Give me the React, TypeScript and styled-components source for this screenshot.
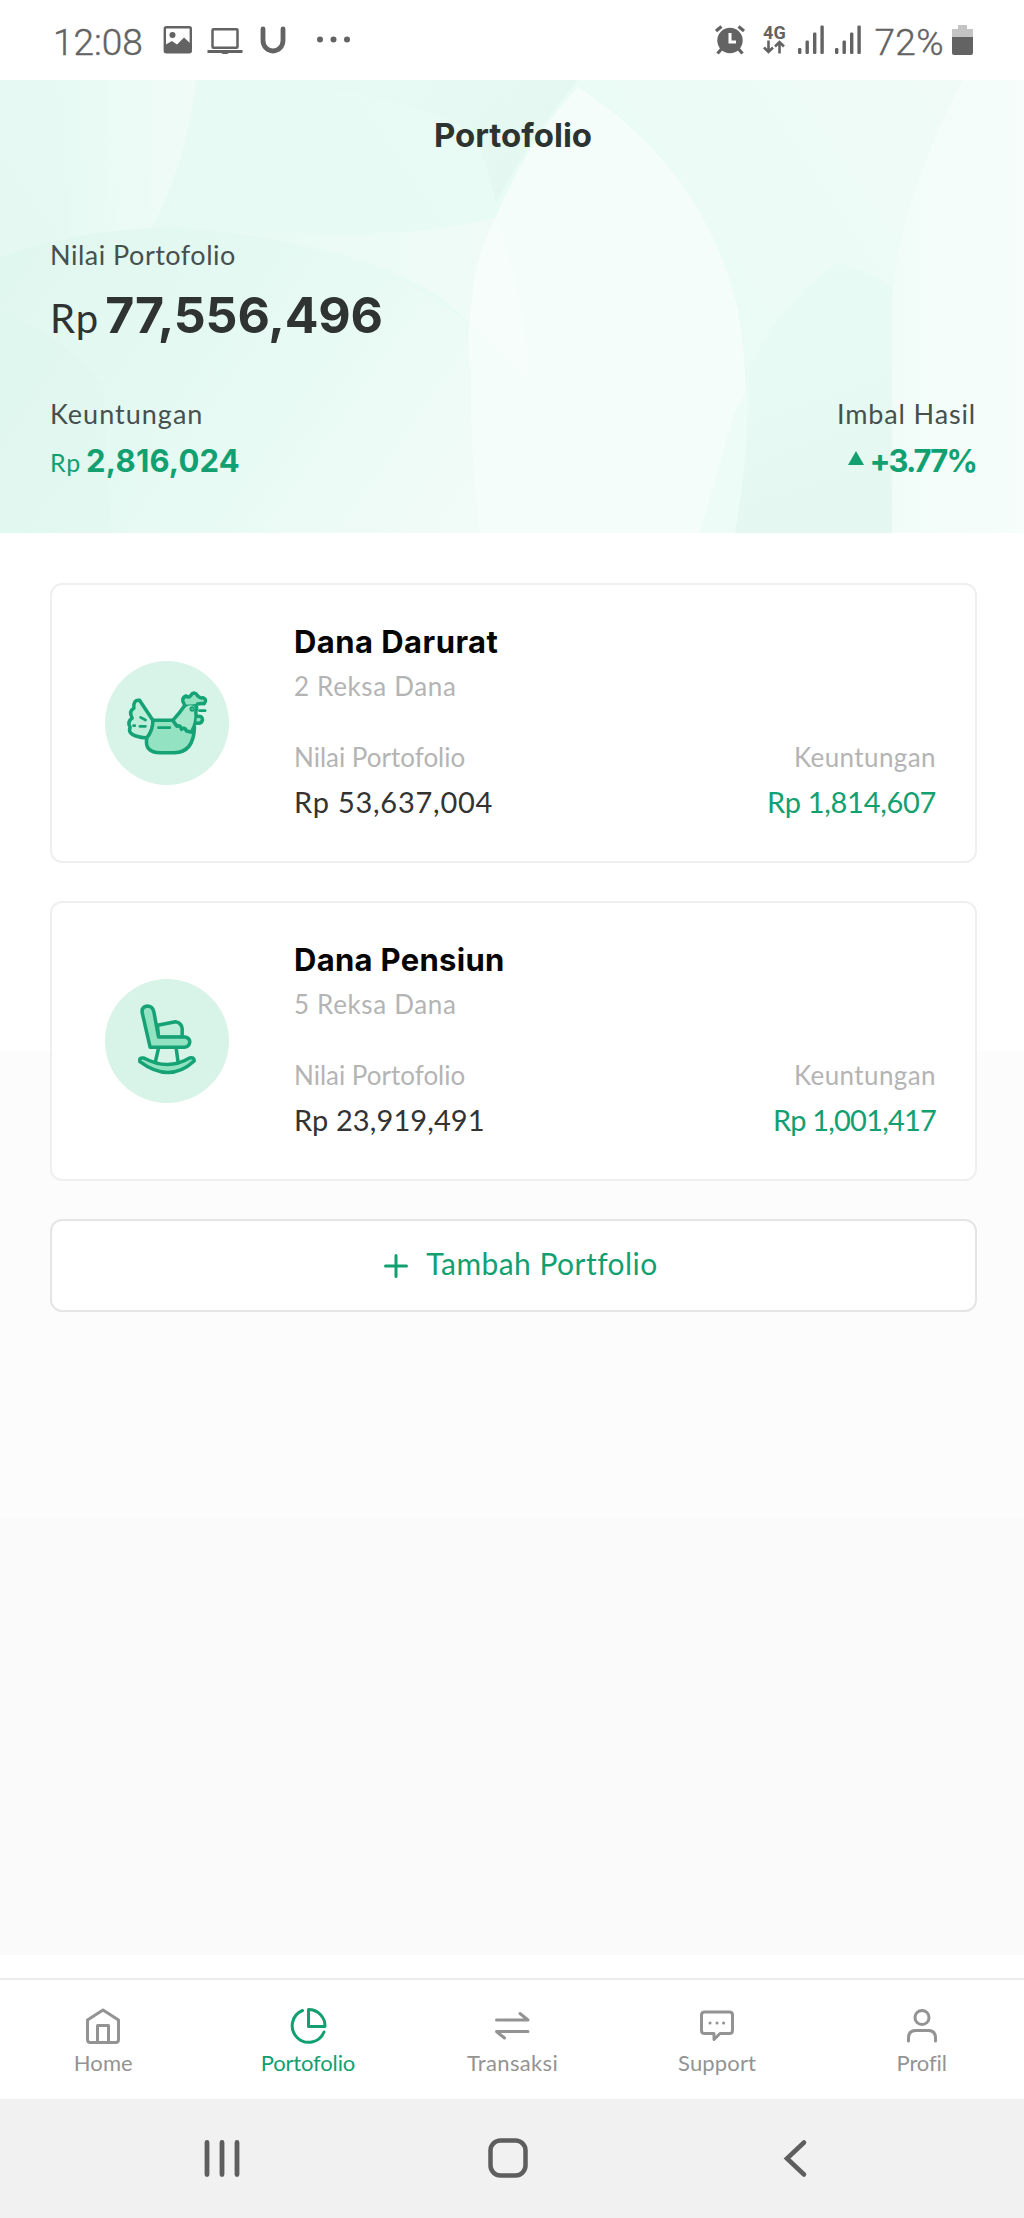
import React from "react";
import styled, { createGlobalStyle } from "styled-components";

const GREEN = "#12a071";

const GlobalStyle = createGlobalStyle`
  * { box-sizing: border-box; }
  body {
    margin: 0;
    background: #fff;
    font-family: Lato, "Liberation Sans", sans-serif;
    color: #333;
  }
`;

const Screen = styled.div`
  display: flex;
  flex-direction: column;
  width: 1024px;
  height: 2218px;
  overflow: hidden;
`;

/* ---------- status bar ---------- */

const StatusBar = styled.div`
  display: flex;
  justify-content: space-between;
  height: 80px;
  padding: 25px 51px 0 53px;
  color: #636363;
`;

const StatusGroup = styled.div`
  display: flex;
  height: 32px;
`;

const StatusText = styled.span<{ $ls?: number }>`
  font-family: Roboto, sans-serif;
  font-size: 37px;
  font-weight: 300;
  -webkit-text-stroke: 0.4px currentColor;
  line-height: 35px;
  letter-spacing: ${(p) => p.$ls ?? 0}px;
  white-space: nowrap;
`;

const StatusIcon = styled.svg<{ $left: number }>`
  display: block;
  flex: none;
  height: 32px;
  margin-left: ${(p) => p.$left}px;
`;

const NetworkBadge = styled.div`
  display: flex;
  flex-direction: column;
  align-items: center;
  width: 24px;
  margin-left: 16px;
  font: 700 18px/15px Roboto, sans-serif;
`;

/* ---------- summary header ---------- */

const Summary = styled.header`
  position: relative;
  height: 453px;
  padding: 35px 48px 0 50px;
  overflow: hidden;
`;

const Leaves = styled.svg`
  position: absolute;
  inset: 0;
  width: 1024px;
  height: 453px;
`;

const SummaryContent = styled.div`
  position: relative;
`;

const Title = styled.h1`
  margin: 0 0 84px;
  font: 700 33px/40px Inter, sans-serif;
  text-align: center;
  color: #2d3331;
`;

const Label = styled.div<{ $ls?: number }>`
  font-size: 26px;
  line-height: 32px;
  letter-spacing: ${(p) => p.$ls ?? 0}px;
  color: #46504d;
`;

const SummaryLabel = styled(Label)`
  font-size: 27px;
`;

const Total = styled.div`
  display: flex;
  align-items: baseline;
  gap: 6px;
  height: 60px;
  margin: 14px 0 53px;
  color: #2f3332;
`;

const TotalCurrency = styled.span`
  font-size: 40px;
  line-height: 40px;
  letter-spacing: 1px;
`;

const TotalValue = styled.span`
  font: 700 50px/60px Inter, sans-serif;
  letter-spacing: -0.2px;
`;

const Split = styled.div`
  display: flex;
  justify-content: space-between;
`;

const Column = styled.div<{ $end?: boolean }>`
  display: flex;
  flex-direction: column;
  align-items: ${(p) => (p.$end ? "flex-end" : "flex-start")};
`;

const Gain = styled.div<{ $ls?: number }>`
  display: flex;
  align-items: baseline;
  gap: 5px;
  height: 40px;
  margin-top: 11px;
  font: 700 31px/40px Inter, sans-serif;
  letter-spacing: ${(p) => p.$ls ?? 0}px;
  color: ${GREEN};
`;

const GainCurrency = styled.span`
  font: 400 25px/25px Lato, sans-serif;
  letter-spacing: 0.8px;
`;

const UpMarker = styled.span`
  width: 0;
  height: 0;
  margin-bottom: 6px;
  align-self: center;
  border: solid transparent;
  border-width: 0 8px 14px;
  border-bottom-color: ${GREEN};
`;

/* ---------- portfolio list ---------- */

const Main = styled.main`
  display: flex;
  flex-direction: column;
  gap: 38px;
  height: 1422px;
  padding: 50px 47px 0 50px;
  background: linear-gradient(#fff 0 518px, #fcfcfc 518px 985px, #fafafa 985px);
`;

const Card = styled.article`
  display: flex;
  align-items: center;
  height: 280px;
  padding: 0 39px 0 53px;
  border: 2px solid #efefef;
  border-radius: 12px;
  background: #fff;
`;

const Avatar = styled.svg`
  flex: none;
  width: 124px;
  height: 124px;
  margin-right: 65px;
  border-radius: 50%;
  background: #d8f3e8;
`;

const CardBody = styled.div`
  flex: 1;
  height: 202px;
`;

const CardTitle = styled.h2<{ $ls: number }>`
  margin: 0 0 8px;
  font: 700 31px/40px Inter, sans-serif;
  letter-spacing: ${(p) => p.$ls}px;
  color: #050505;
`;

const Muted = styled(Label)`
  color: #b4b4b4;
`;

const Figures = styled(Split)`
  margin-top: 39px;
`;

const Amount = styled.div<{ $ls: number; $gain?: boolean }>`
  margin-top: 11px;
  font-size: 29px;
  line-height: 36px;
  letter-spacing: ${(p) => p.$ls}px;
  color: ${(p) => (p.$gain ? GREEN : "#333")};
`;

const AddButton = styled.button`
  display: flex;
  align-items: center;
  justify-content: center;
  gap: 18px;
  height: 93px;
  padding: 0 0 0 15px;
  border: 2px solid #e5e5e5;
  border-radius: 12px;
  background: #fff;
  color: ${GREEN};
  font: 400 30px/36px Lato, sans-serif;
  letter-spacing: 0.45px;
`;

const AddLabel = styled.span`
  padding-bottom: 6px;
`;

/* ---------- tab bar ---------- */

const TabBar = styled.nav`
  display: grid;
  grid-template-columns: repeat(5, 1fr);
  height: 121px;
  margin-top: 23px;
  padding: 26px 0 0 1px;
  border-top: 2px solid #ececec;
`;

const Tab = styled.a<{ $active?: boolean; $ls?: number }>`
  display: flex;
  flex-direction: column;
  align-items: center;
  gap: 3px;
  font-size: 22px;
  line-height: 28px;
  letter-spacing: ${(p) => p.$ls ?? 0}px;
  color: ${(p) => (p.$active ? GREEN : "#939393")};
`;

const TabIcon = styled.svg`
  width: 40px;
  height: 40px;
  fill: none;
  stroke: currentColor;
  stroke-width: 3;
  stroke-linecap: round;
  stroke-linejoin: round;
`;

const SystemBar = styled.div`
  display: grid;
  grid-template-columns: repeat(3, 286.5px);
  justify-items: center;
  height: 119px;
  padding: 37px 0 0 78.25px;
  background: #f1f1f1;
`;

const SystemIcon = styled.svg`
  width: 44px;
  height: 44px;
  fill: none;
  stroke: #5e5e5e;
  stroke-linecap: round;
`;

/* ---------- drawings ---------- */

const SignalBars = () => (
  <StatusIcon width="26" viewBox="0 0 26 32" $left={0} fill="currentColor">
    <rect x="0" y="23" width="3.4" height="6" rx="1.2" />
    <rect x="7.5" y="15.5" width="3.4" height="13.5" rx="1.2" />
    <rect x="15" y="7.5" width="3.4" height="21.5" rx="1.2" />
    <rect x="22.4" y="0.5" width="3.4" height="28.5" rx="1.2" />
  </StatusIcon>
);

const SignalPair = styled.div`
  display: flex;
  gap: 11px;
  margin: 0 13px 0 12px;
`;

const LeafBackdrop = () => (
  <Leaves viewBox="0 0 1024 453" aria-hidden="true">
    <defs>
      <linearGradient id="base" x1="0" y1="0.3" x2="1" y2="0">
        <stop offset="0" stopColor="#e5f9f2" />
        <stop offset="0.5" stopColor="#e9fbf5" />
        <stop offset="1" stopColor="#f1fbf8" />
      </linearGradient>
      <linearGradient id="stripe" x1="0" y1="0" x2="1" y2="0">
        <stop offset="0" stopColor="#f1fcf8" stopOpacity="0" />
        <stop offset="1" stopColor="#f0fbf7" />
      </linearGradient>
      <linearGradient id="hill" x1="0" y1="0.2" x2="1" y2="0.6">
        <stop offset="0" stopColor="#e0f7ef" />
        <stop offset="0.55" stopColor="#e7faf4" />
        <stop offset="1" stopColor="#f1fbf8" />
      </linearGradient>
      <linearGradient id="dark" x1="0" y1="0" x2="0.2" y2="1">
        <stop offset="0" stopColor="#e9fbf5" />
        <stop offset="1" stopColor="#e4f8f1" />
      </linearGradient>
      <linearGradient id="mid" x1="0" y1="0" x2="1" y2="0.3">
        <stop offset="0" stopColor="#e4f8f2" stopOpacity="0" />
        <stop offset="1" stopColor="#e4f8f1" />
      </linearGradient>
      <linearGradient id="band" x1="0" y1="0" x2="1" y2="0">
        <stop offset="0" stopColor="#eefbf7" stopOpacity="0" />
        <stop offset="1" stopColor="#f0fbf7" />
      </linearGradient>
      <linearGradient id="right" x1="0" y1="0" x2="1" y2="0">
        <stop offset="0" stopColor="#f1fcf8" />
        <stop offset="1" stopColor="#f6fdfb" />
      </linearGradient>
    </defs>
    <rect width="1024" height="453" fill="url(#base)" />
    <path d="M60 0H196Q188 80 150 152Q110 150 60 160Z" fill="url(#stripe)" />
    <path d="M230 0H578Q525 65 496 123Q488 90 478 60Q420 10 230 0Z" fill="url(#mid)" />
    <path d="M180 148Q400 165 496 137Q470 190 471 245Q400 165 180 148Z" fill="url(#band)" />
    <path d="M0 177Q90 146 180 148Q330 158 430 217Q500 262 527 300Q532 380 510 453H0Z" fill="url(#hill)" />
    <path d="M0 230Q70 260 104 307Q104 380 112 453H0Z" fill="#def7ee" opacity="0.45" />
    <path d="M578 7Q525 65 496 137Q460 230 471 290Q470 380 480 453H735Q755 330 738 230Q705 90 578 7Z" fill="#f4fdfa" />
    <path d="M496 137Q470 185 471 245Q505 272 530 304Q523 205 496 137Z" fill="#f7fdfb" />
    <path d="M471 245Q473 350 490 453H510Q532 390 530 304Q505 272 471 245Z" fill="#f5fdfa" />
    <path d="M735 330Q715 400 700 453H735Q745 390 748 310Z" fill="#eefcf7" />
    <path d="M735 453Q752 350 749 290Q780 220 836 183Q870 190 892 207V453Z" fill="url(#dark)" />
    <path d="M963 0Q890 140 892 240V453H1024V0Z" fill="url(#right)" />
  </Leaves>
);

const HenIcon = () => (
  <Avatar viewBox="46.5 63 372 372" fill="#93e2c2" stroke="#15a274" strokeWidth="10.5" strokeLinecap="round" strokeLinejoin="round">
    <path d="M150 181L190 241Q192 270 172 294Q155 293 139 288Q114 280 122 262Q112 246 128 234Q117 214 133 205Q131 178 150 181Z" fill="#bdeeda" />
    <path d="M190 241H250L262 258Q276 254 276 267Q287 258 291 272L306 276L315 262Q312 337 255 338H212Q164 338 172 294Q191 270 190 241Z" />
    <path d="M250 241Q270 219 283 200Q294 186 312 192Q327 199 319 215Q323 245 306 276L291 273Q287 260 276 268Q275 255 262 258Z" fill="#a7e8cd" />
    <path d="M285 194Q272 175 290 168Q300 175 303 167Q314 151 325 168Q333 176 340 173Q354 178 344 191Q335 190 324 192" />
    <path d="M322 229Q339 226 339 240Q336 252 321 249" />
    <circle cx="308" cy="207" r="5" strokeWidth="6" />
    <path d="M330 212H347M207 263H241M153 232L168 240M151 259H168M132 257H136" fill="none" strokeWidth="8" />
  </Avatar>
);

const ChairIcon = () => (
  <Avatar viewBox="46.5 57 372 372" fill="#93e2c2" stroke="#15a274" strokeWidth="10.5" strokeLinecap="round" strokeLinejoin="round">
    <path d="M207 265L197 308M260 265L266 308" fill="none" />
    <path d="M204 196L258 185Q276 188 278 205V232H207Z" fill="#bdeeda" />
    <path d="M182 262L158 158Q156 140 173 138Q189 138 193 155L207 231H287Q301 235 301 246Q299 260 285 262Z" />
    <path d="M163 294Q235 333 300 294Q314 290 314 303Q240 371 151 305Q147 292 163 294Z" />
  </Avatar>
);

const tabs = [
  {
    name: "Home",
    ls: 0.1,
    icon: (
      <>
        <path d="M4.5 14L20 4L35.500 14V33.500Q35.500 36.500 32.500 36.500H7.500Q4.500 36.500 4.500 33.500Z" />
        <path d="M14.500 36V19.500H25.500V36" />
      </>
    ),
  },
  {
    name: "Portofolio",
    ls: -0.15,
    active: true,
    icon: (
      <>
        <path d="M14.500 4.500A16.500 16.500 0 1 0 36 26" />
        <path d="M20.500 3.500A16.500 16.500 0 0 1 37 20.500H20.500Z" />
      </>
    ),
  },
  {
    name: "Transaksi",
    ls: 0.33,
    icon: <path d="M4.500 14H36L28 7.500M36 25.500H4.500L12.500 32" />,
  },
  {
    name: "Support",
    ls: 0.14,
    icon: (
      <>
        <path d="M7.500 6H32.500Q35.500 6 35.500 9V24.500Q35.500 27.500 32.500 27.500H23L17 33.500V27.500H7.500Q4.500 27.500 4.500 24.500V9Q4.500 6 7.500 6Z" />
        <path d="M13 17h.1M20 17h.1M26.500 17h.1" />
      </>
    ),
  },
  {
    name: "Profil",
    ls: -0.1,
    icon: (
      <>
        <circle cx="20" cy="11.500" r="7" />
        <path d="M6.500 35V32Q6.500 24.500 14 24.500H26Q33.500 24.500 33.500 32V35" />
      </>
    ),
  },
];

const funds = [
  {
    name: "Dana Darurat",
    nameLs: 0.45,
    count: "2 Reksa Dana",
    value: "Rp 53,637,004",
    valueLs: 0.75,
    gain: "Rp 1,814,607",
    gainLs: -0.3,
    Icon: HenIcon,
  },
  {
    name: "Dana Pensiun",
    nameLs: 0.3,
    count: "5 Reksa Dana",
    value: "Rp 23,919,491",
    valueLs: 0.1,
    gain: "Rp 1,001,417",
    gainLs: -0.8,
    Icon: ChairIcon,
  },
];

export default function App() {
  return (
    <Screen>
      <GlobalStyle />
      <StatusBar>
        <StatusGroup>
          <StatusText $ls={0}>12:08</StatusText>
          <StatusIcon $left={20} width="30" viewBox="0 0 30 32">
            <rect x="1.800" y="2.300" width="26" height="25" rx="1.500" fill="none" stroke="currentColor" strokeWidth="2.400" />
            <circle cx="9.500" cy="10" r="3" fill="currentColor" />
            <path d="M2 20L9 16L14 19.500L21 12.500L28 19V28H2Z" fill="currentColor" />
          </StatusIcon>
          <StatusIcon $left={14} width="36" viewBox="0 0 36 32">
            <rect x="5.500" y="4.200" width="25" height="18.500" rx="1" fill="none" stroke="currentColor" strokeWidth="2.500" />
            <path d="M0.500 25H35.500V28H22L20 29H16L14 28H0.500Z" fill="currentColor" />
          </StatusIcon>
          <StatusIcon $left={17} width="26" viewBox="0 0 26 32">
            <path d="M3 4V15.500A10 10.500 0 0 0 23 15.500V4" fill="none" stroke="currentColor" strokeWidth="4.800" strokeLinecap="round" />
          </StatusIcon>
          <StatusIcon $left={30} width="34" viewBox="0 0 34 32" fill="currentColor">
            <circle cx="4" cy="14.500" r="3" />
            <circle cx="17.500" cy="14.500" r="3" />
            <circle cx="31" cy="14.500" r="3" />
          </StatusIcon>
        </StatusGroup>
        <StatusGroup>
          <StatusIcon $left={0} width="32" viewBox="0 0 32 32">
            <circle cx="16" cy="15.500" r="12.700" fill="currentColor" />
            <path d="M2 6L7.500 1.500M30 6L24.500 1.500M7.500 24L3.500 28.500M24.500 24L28.500 28.500" stroke="currentColor" strokeWidth="3.200" />
            <path d="M16 8V17H22" fill="none" stroke="#fff" strokeWidth="3" />
          </StatusIcon>
          <NetworkBadge>
            4G
            <svg width="22" height="14" viewBox="0 0 22 14" fill="none" stroke="currentColor" strokeWidth="2.600">
              <path d="M5.500 0.500V12M1 7.500L5.500 12L10 7.500M16.500 13.500V2M12 6.500L16.500 2L21 6.500" />
            </svg>
          </NetworkBadge>
          <SignalPair>
            <SignalBars />
            <SignalBars />
          </SignalPair>
          <StatusText $ls={0.4}>72%</StatusText>
          <StatusIcon $left={8} width="21" viewBox="0 0 21 32">
            <path d="M6 0H15V4H21V12H0V4H6Z" fill="#c4c4c4" />
            <path d="M0 12H21V28Q21 30 19 30H2Q0 30 0 28Z" fill="currentColor" />
          </StatusIcon>
        </StatusGroup>
      </StatusBar>

      <Summary>
        <LeafBackdrop />
        <SummaryContent>
          <Title>Portofolio</Title>
          <SummaryLabel $ls={0.5}>Nilai Portofolio</SummaryLabel>
          <Total>
            <TotalCurrency>Rp</TotalCurrency>
            <TotalValue>77,556,496</TotalValue>
          </Total>
          <Split>
            <Column>
              <SummaryLabel $ls={1}>Keuntungan</SummaryLabel>
              <Gain $ls={0.2}>
                <GainCurrency>Rp</GainCurrency>
                2,816,024
              </Gain>
            </Column>
            <Column $end>
              <SummaryLabel $ls={0.85}>Imbal Hasil</SummaryLabel>
              <Gain $ls={-1.9}>
                <UpMarker />
                +3.77%
              </Gain>
            </Column>
          </Split>
        </SummaryContent>
      </Summary>

      <Main>
        {funds.map(({ Icon, ...fund }) => (
          <Card key={fund.name}>
            <Icon />
            <CardBody>
              <CardTitle $ls={fund.nameLs}>{fund.name}</CardTitle>
              <Muted $ls={0.65}>{fund.count}</Muted>
              <Figures>
                <Column>
                  <Muted>Nilai Portofolio</Muted>
                  <Amount $ls={fund.valueLs}>{fund.value}</Amount>
                </Column>
                <Column $end>
                  <Muted $ls={0.4}>Keuntungan</Muted>
                  <Amount $gain $ls={fund.gainLs}>{fund.gain}</Amount>
                </Column>
              </Figures>
            </CardBody>
          </Card>
        ))}
        <AddButton>
          <svg width="24" height="24" viewBox="0 0 24 24" stroke="currentColor" strokeWidth="3" strokeLinecap="round">
            <path d="M12 1.500V22.500M1.500 12H22.500" />
          </svg>
          <AddLabel>Tambah Portfolio</AddLabel>
        </AddButton>
      </Main>

      <TabBar>
        {tabs.map((tab) => (
          <Tab key={tab.name} $active={tab.active} $ls={tab.ls}>
            <TabIcon viewBox="0 0 40 40">{tab.icon}</TabIcon>
            {tab.name}
          </Tab>
        ))}
      </TabBar>

      <SystemBar>
        <SystemIcon viewBox="0 0 44 44" strokeWidth="4.800">
          <path d="M7 6.500V38.500M22 6.500V38.500M37 6.500V38.500" />
        </SystemIcon>
        <SystemIcon viewBox="0 0 44 44" strokeWidth="4.500">
          <rect x="4.500" y="4.500" width="35" height="35" rx="10" />
        </SystemIcon>
        <SystemIcon viewBox="0 0 44 44" strokeWidth="4.600">
          <path d="M31 6.500L14 22.500L31 38.500" />
        </SystemIcon>
      </SystemBar>
    </Screen>
  );
}
